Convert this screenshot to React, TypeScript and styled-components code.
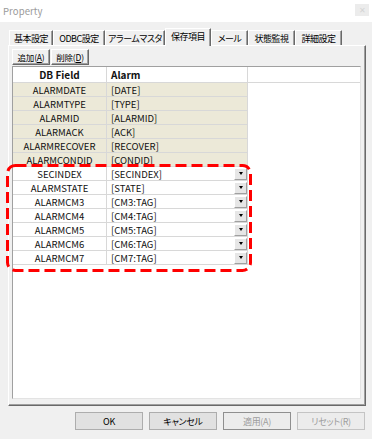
import React from 'react';
import styled, { createGlobalStyle } from 'styled-components';

const GlobalStyle = createGlobalStyle`
  html, body {
    margin: 0;
    padding: 0;
    background: #f0f0f0;
  }
  body {
    font-family: "Noto Sans CJK JP", "Noto Sans", sans-serif;
    font-feature-settings: "palt";
    color: #000;
  }
`;

const Window = styled.div`
  position: relative;
  width: 372px;
  height: 439px;
  background: #f0f0f0;
  display: flex;
  flex-direction: column;
  overflow: hidden;
`;

const TitleBar = styled.div`
  height: 22px;
  background: #fff;
  display: flex;
  align-items: center;
  justify-content: space-between;
  padding: 0 3px 0 3px;
  box-sizing: border-box;
`;

const Title = styled.span`
  font-size: 9.5px;
  color: #9a9a9a;
  letter-spacing: 0.1px;
`;

const CloseBox = styled.div`
  width: 14px;
  height: 12px;
  margin-top: -2px;
  background: #ececec;
  display: flex;
  align-items: center;
  justify-content: center;
  color: #d4d4d4;
  font-size: 8px;
  line-height: 1;
`;

const TabStrip = styled.div`
  display: flex;
  align-items: flex-end;
  height: 17px;
  margin: 6px 0 0 9px;
  position: relative;
  z-index: 2;
`;

const Tab = styled.div<{ $w: number; $active?: boolean }>`
  box-sizing: border-box;
  width: ${(p) => p.$w}px;
  height: ${(p) => (p.$active ? 18 : 15)}px;
  margin-bottom: ${(p) => (p.$active ? -1 : 0)}px;
  background: #f0f0f0;
  border-top: 1px solid #fff;
  border-left: 1px solid #fff;
  border-right: 1px solid #696969;
  box-shadow: inset -1px 0 0 #a0a0a0;
  display: flex;
  align-items: center;
  justify-content: center;
  font-size: 9px;
  letter-spacing: -0.5px;
  white-space: nowrap;
  padding-bottom: ${(p) => (p.$active ? 2 : 0)}px;
`;

const Panel = styled.div`
  box-sizing: border-box;
  margin-left: 8px;
  width: 358px;
  height: 361px;
  border-top: 1px solid #fff;
  border-left: 1px solid #fff;
  border-right: 1px solid #696969;
  border-bottom: 1px solid #696969;
  box-shadow: inset -1px -1px 0 #a0a0a0;
  padding: 3px 4px 6px 3px;
  display: flex;
  flex-direction: column;
`;

const Toolbar = styled.div`
  display: flex;
  gap: 1px;
  height: 16px;
  margin-bottom: 1px;
`;

const ToolButton = styled.div`
  box-sizing: border-box;
  width: 38px;
  height: 16px;
  border-top: 1px solid #fff;
  border-left: 1px solid #fff;
  border-right: 1px solid #696969;
  border-bottom: 1px solid #696969;
  box-shadow: inset -1px -1px 0 #a0a0a0;
  display: flex;
  align-items: center;
  justify-content: center;
  font-size: 8.5px;
  letter-spacing: -0.2px;
  white-space: nowrap;
  u {
    text-decoration: underline;
    text-underline-offset: 1px;
  }
`;

const Grid = styled.div`
  flex: 1;
  box-sizing: border-box;
  background: #fff;
  border-top: 1px solid #a0a0a0;
  border-left: 1px solid #a0a0a0;
  border-right: 1px solid #e3e3e3;
  border-bottom: 1px solid #e3e3e3;
  display: flex;
  flex-direction: column;
`;

const Row = styled.div<{ $header?: boolean }>`
  display: grid;
  grid-template-columns: 94px 141px 1fr;
  height: ${(p) => (p.$header ? 16 : 14)}px;
`;

const Cell = styled.div<{ $beige?: boolean; $center?: boolean; $header?: boolean }>`
  box-sizing: border-box;
  background: ${(p) => (p.$beige ? '#ece9d8' : '#fff')};
  border-right: 1px solid #d8d8d8;
  border-bottom: 1px solid #d8d8d8;
  display: flex;
  align-items: center;
  justify-content: ${(p) => (p.$center ? 'center' : 'flex-start')};
  padding-left: ${(p) => (p.$center ? 0 : 4)}px;
  font-size: ${(p) => (p.$header ? 10 : 9.5)}px;
  font-weight: ${(p) => (p.$header ? 700 : 400)};
  color: #111;
  white-space: nowrap;
  line-height: 12px;
`;

const Filler = styled.div<{ $header?: boolean }>`
  background: #fff;
  border-bottom: ${(p) => (p.$header ? '1px solid #d8d8d8' : 'none')};
`;

const CellText = styled.span`
  flex: 1;
`;

const DropButton = styled.div`
  box-sizing: border-box;
  width: 13px;
  height: 12px;
  background: #e6e6e6;
  border-top: 1px solid #fff;
  border-left: 1px solid #fff;
  border-right: 1px solid #a0a0a0;
  border-bottom: 1px solid #a0a0a0;
  display: flex;
  align-items: center;
  justify-content: center;
`;

const Arrow = styled.div`
  width: 0;
  height: 0;
  border-left: 2.5px solid transparent;
  border-right: 2.5px solid transparent;
  border-top: 3px solid #000;
`;

const ButtonRow = styled.div`
  display: flex;
  justify-content: flex-end;
  gap: 6px;
  margin-top: 6px;
  padding-right: 7px;
`;

const DialogButton = styled.div<{ $disabled?: boolean; $focus?: boolean }>`
  box-sizing: border-box;
  width: 68px;
  height: 18px;
  background: ${(p) => (p.$disabled ? '#ececec' : '#e1e1e1')};
  border: 1px solid ${(p) => (p.$focus ? '#8f8f8f' : p.$disabled ? '#c4c4c4' : '#adadad')};
  color: ${(p) => (p.$disabled ? '#9d9d9d' : '#000')};
  display: flex;
  align-items: center;
  justify-content: center;
  font-size: 9px;
  letter-spacing: -0.3px;
  white-space: nowrap;
`;

const Highlight = styled.svg`
  position: absolute;
  left: 6px;
  top: 164px;
  width: 246px;
  height: 108px;
  pointer-events: none;
  z-index: 5;
`;

const tabs = [
  { label: '基本設定', w: 44 },
  { label: 'ODBC設定', w: 52 },
  { label: 'アラームマスタ', w: 60 },
  { label: '保存項目', w: 46, active: true },
  { label: 'メール', w: 37 },
  { label: '状態監視', w: 47 },
  { label: '詳細設定', w: 47 },
];

const rows: { field: string; alarm: string; fixed: boolean }[] = [
  { field: 'ALARMDATE', alarm: '[DATE]', fixed: true },
  { field: 'ALARMTYPE', alarm: '[TYPE]', fixed: true },
  { field: 'ALARMID', alarm: '[ALARMID]', fixed: true },
  { field: 'ALARMACK', alarm: '[ACK]', fixed: true },
  { field: 'ALARMRECOVER', alarm: '[RECOVER]', fixed: true },
  { field: 'ALARMCONDID', alarm: '[CONDID]', fixed: true },
  { field: 'SECINDEX', alarm: '[SECINDEX]', fixed: false },
  { field: 'ALARMSTATE', alarm: '[STATE]', fixed: false },
  { field: 'ALARMCM3', alarm: '[CM3:TAG]', fixed: false },
  { field: 'ALARMCM4', alarm: '[CM4:TAG]', fixed: false },
  { field: 'ALARMCM5', alarm: '[CM5:TAG]', fixed: false },
  { field: 'ALARMCM6', alarm: '[CM6:TAG]', fixed: false },
  { field: 'ALARMCM7', alarm: '[CM7:TAG]', fixed: false },
];

const App = () => {
  return (
    <>
      <GlobalStyle />
      <Window>
        <TitleBar>
          <Title>Property</Title>
          <CloseBox>✕</CloseBox>
        </TitleBar>

        <TabStrip>
          {tabs.map((t) => (
            <Tab key={t.label} $w={t.w} $active={t.active}>
              {t.label}
            </Tab>
          ))}
        </TabStrip>

        <Panel>
          <Toolbar>
            <ToolButton>
              追加(<u>A</u>)
            </ToolButton>
            <ToolButton>
              削除(<u>D</u>)
            </ToolButton>
          </Toolbar>

          <Grid>
            <Row $header>
              <Cell $header $center>
                DB Field
              </Cell>
              <Cell $header>Alarm</Cell>
              <Filler $header />
            </Row>
            {rows.map((r) => (
              <Row key={r.field}>
                <Cell $beige={r.fixed} $center>
                  {r.field}
                </Cell>
                <Cell $beige={r.fixed}>
                  <CellText>{r.alarm}</CellText>
                  {!r.fixed && (
                    <DropButton>
                      <Arrow />
                    </DropButton>
                  )}
                </Cell>
                <Filler />
              </Row>
            ))}
          </Grid>
        </Panel>

        <ButtonRow>
          <DialogButton>OK</DialogButton>
          <DialogButton>キャンセル</DialogButton>
          <DialogButton $disabled $focus>
            適用(A)
          </DialogButton>
          <DialogButton $disabled>リセット(R)</DialogButton>
        </ButtonRow>

        <Highlight viewBox="0 0 246 108">
          <rect
            x="1.5"
            y="1.5"
            width="243"
            height="105"
            rx="8"
            ry="8"
            fill="none"
            stroke="#ff0000"
            strokeWidth="3"
            strokeDasharray="11 5"
          />
        </Highlight>
      </Window>
    </>
  );
};

export default App;
